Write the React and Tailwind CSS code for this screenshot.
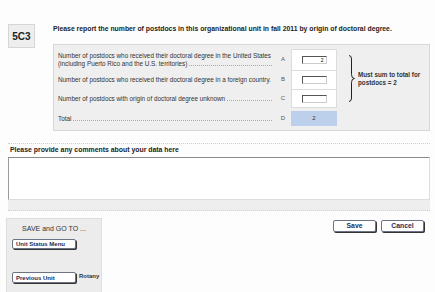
function Leader({ children }) {
  return (
    <div className="flex items-end whitespace-nowrap">
      <span className="shrink-0">{children}</span>
      <span className="flex-1 min-w-0 ml-[2px] mb-[2px] border-b border-dotted border-[#aaa]" />
    </div>
  );
}

function SmallInput({ value }) {
  return (
    <div className="w-[25px] h-[8px] bg-white border border-t-[#555] border-l-[#555] border-r-[#ccc] border-b-[#ccc] text-right text-[5px] leading-[6px] pr-[2px] text-black">
      {value}
    </div>
  );
}

function Brace() {
  return (
    <svg width="8" height="47" viewBox="0 0 8 47" className="shrink-0">
      <path
        d="M1 0.5 Q3.5 0.5 3.5 4 L3.5 19.5 Q3.5 23.5 6.5 23.5 Q3.5 23.5 3.5 27.5 L3.5 43 Q3.5 46.5 1 46.5"
        fill="none"
        stroke="#222"
        strokeWidth="1"
      />
    </svg>
  );
}

function NavButton({ children, className = "" }) {
  return (
    <button
      className={`bg-white border border-[#6b7385] rounded-[2px] shadow-[1px_1px_0_#333] text-left font-bold text-[#1d2b57] text-[6px] leading-none pl-[3px] ${className}`}
    >
      {children}
    </button>
  );
}

export default function App() {
  const rows = [
    { letter: "A", h: "h-[21px]", value: "2", label: (
      <div className="leading-[8px]">
        <div className="whitespace-nowrap">Number of postdocs who received their doctoral degree in the United States</div>
        <Leader>(including Puerto Rico and the U.S. territories)</Leader>
      </div>
    ) },
    { letter: "B", h: "h-[19px]", value: "", label: <div className="whitespace-nowrap">Number of postdocs who received their doctoral degree in a foreign country.</div> },
    { letter: "C", h: "h-[19px]", value: "", label: <Leader>Number of postdocs with origin of doctoral degree unknown</Leader> },
  ];

  return (
    <div className="w-[435px] h-[292px] overflow-hidden bg-[#fdfdfd] font-['Liberation_Sans',Arial,sans-serif] text-[#222]">
      <div className="flex pt-[24px] pl-[8px]">
        <div className="w-[27px] h-[24px] bg-[#eeeeee] border border-[#d6d6d6] flex items-center justify-center text-[10px] font-bold text-[#222]">
          5C3
        </div>
        <div className="ml-[18px] w-[377px]">
          <div className="text-[6.85px] leading-[10px] font-bold text-[#222] whitespace-nowrap">
            Please report the number of postdocs in this organizational unit in fall 2011 by origin of doctoral degree.
          </div>
          <div className="mt-[10px] bg-[#efefef] border border-[#d8d8d8] pt-[4px] pb-[4px] pl-[4px] flex text-[6.35px] text-[#333]">
            <div>
              {rows.map((r, i) => (
                <div key={r.letter} className={`flex ${r.h}`}>
                  <div className="w-[217px] flex items-center">
                    <div className="w-[214px]">{r.label}</div>
                  </div>
                  <div className="w-[16px] flex items-center justify-center text-[#555] text-[6px]">{r.letter}</div>
                  <div className={`w-[46px] bg-white border-x border-t border-[#dcdcdc] flex items-center justify-center ${i === 2 ? "border-b" : ""}`}>
                    <SmallInput value={r.value} />
                  </div>
                </div>
              ))}
              <div className="flex h-[15px] mt-[3px]">
                <div className="w-[217px] flex items-center">
                  <div className="w-[214px]"><Leader>Total</Leader></div>
                </div>
                <div className="w-[16px] flex items-center justify-center text-[#555] text-[6px]">D</div>
                <div className="w-[46px] bg-[#bcd0ec] flex items-center justify-center text-[#333] text-[6px]">2</div>
              </div>
            </div>
            <div className="h-[59px] flex items-center ml-[11px]">
              <Brace />
              <div className="ml-[2px] text-[6.3px] leading-[7.5px] font-bold text-[#333] whitespace-nowrap">
                <div>Must sum to total for</div>
                <div>postdocs = 2</div>
              </div>
            </div>
          </div>
        </div>
      </div>

      <div className="mt-[12px] ml-[8px] mr-[5px] border-t border-dotted border-[#cfcfcf]" />

      <div className="ml-[8px] mr-[5px]">
        <div className="text-[6.9px] leading-[12px] font-bold text-[#222] pl-[2px]">
          Please provide any comments about your data here
        </div>
        <div className="mt-[1px] h-[43px] bg-white border border-t-[#8a8a8a] border-l-[#9a9a9a] border-r-[#ddd] border-b-[#ddd] border-r-dotted" />
        <div className="h-[11px] bg-[#eeeeee] border-b border-dotted border-[#cfcfcf]" />
      </div>

      <div className="flex justify-between mt-[7px]">
        <div className="ml-[6px] w-[96px] h-[80px] bg-[#ececec] border border-[#dedede] pt-[5px] pl-[5px]">
          <div className="text-[7px] leading-[10px] text-[#333] text-center pr-[5px]">SAVE and GO TO ...</div>
          <NavButton className="mt-[5px] w-[64px] h-[10px] block">Unit Status Menu</NavButton>
          <div className="flex items-center mt-[23px]">
            <NavButton className="w-[64px] h-[11px]">Previous Unit</NavButton>
            <span className="ml-[3px] text-[6px] font-bold text-[#333] -mt-[3px]">Rotany</span>
          </div>
        </div>
        <div className="flex gap-[5px] mr-[11px] mt-[2px] h-[12px]">
          <button className="w-[43px] h-[12px] bg-white border border-[#6b7385] rounded-[2px] shadow-[1px_1px_0_#333] font-bold text-[#1d2b57] text-[6.8px] leading-none">
            Save
          </button>
          <button className="w-[43px] h-[12px] bg-white border border-[#6b7385] rounded-[2px] shadow-[1px_1px_0_#333] font-bold text-[#1d2b57] text-[6.8px] leading-none">
            Cancel
          </button>
        </div>
      </div>
    </div>
  );
}
